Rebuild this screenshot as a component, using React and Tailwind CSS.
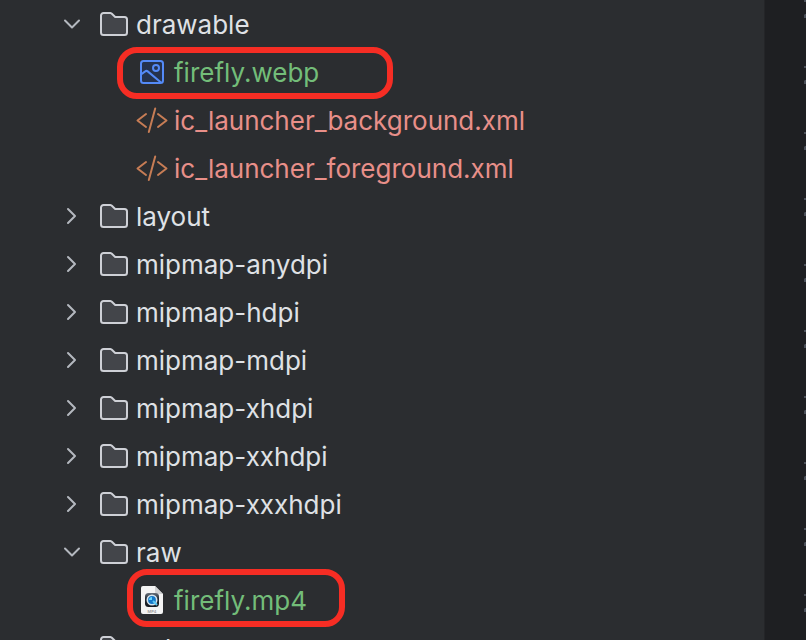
import React from "react";

function Chevron({ open }) {
  return (
    <svg className="size-8 shrink-0" viewBox="0 0 32 32" fill="none" stroke="#b4b8bf" strokeWidth="2" strokeLinecap="round" strokeLinejoin="round" aria-hidden="true">
      <path d={open ? "M9 12.5 16 19.5 23 12.5" : "M12 9 19 16 12 23"} />
    </svg>
  );
}

function FolderIcon() {
  return (
    <svg className="size-8 shrink-0" viewBox="0 0 32 32" aria-hidden="true">
      <path d="M3 7.5A2.5 2.5 0 0 1 5.5 5h6.7a2 2 0 0 1 1.4.6L17.2 9H26.5a2.5 2.5 0 0 1 2.5 2.5v13a2.5 2.5 0 0 1-2.5 2.5H5.5a2.5 2.5 0 0 1-2.5-2.5Z" fill="#43454a" stroke="#ced0d6" strokeWidth="2" strokeLinejoin="round" />
    </svg>
  );
}

function ImageIcon() {
  return (
    <svg className="size-8 shrink-0" viewBox="0 0 32 32" fill="none" stroke="#548af7" strokeWidth="2" aria-hidden="true">
      <rect x="5" y="5" width="22" height="22" rx="2.5" fill="#25324d" />
      <circle cx="20" cy="12" r="3" />
      <path d="M5 18.5 9.2 15.4a2 2 0 0 1 2.5 0L25 26.5" />
    </svg>
  );
}

function XmlIcon() {
  return (
    <svg className="size-8 shrink-0" viewBox="0 0 32 32" fill="none" stroke="#c77d55" strokeWidth="2" strokeLinecap="round" strokeLinejoin="round" aria-hidden="true">
      <path d="M10 10 1.5 16.5 10 23M22 10l8.5 6.5L22 23M19.2 4.5 12.8 28" />
    </svg>
  );
}

function VideoIcon() {
  return (
    <svg className="size-8 shrink-0" viewBox="0 0 32 32" aria-hidden="true">
      <defs>
        <linearGradient id="app" x1="0" y1="0" x2="0" y2="1">
          <stop offset="0" stopColor="#68717c" />
          <stop offset="0.4" stopColor="#252b34" />
          <stop offset="1" stopColor="#14181f" />
        </linearGradient>
      </defs>
      <path d="M5 4a2 2 0 0 1 2-2h12l8 8v18a2 2 0 0 1-2 2H7a2 2 0 0 1-2-2Z" fill="#f4f4f4" />
      <path d="M19 2v6a2 2 0 0 0 2 2h6Z" fill="#cfd0d1" />
      <rect x="9" y="9" width="14" height="14" rx="3.5" fill="url(#app)" />
      <circle cx="16" cy="16" r="4.7" fill="#1578c8" stroke="#d5e4ef" strokeWidth="1.6" />
      <path d="M13 16a3 3 0 0 1 3-3v3Z" fill="#68d6ff" />
      <path d="m17 17 4 4" stroke="#5bc8f4" strokeWidth="2" />
      <text x="16" y="28.5" textAnchor="middle" fontSize="4" fontWeight="600" fill="#999999" fontFamily="Inter, sans-serif">MP4</text>
    </svg>
  );
}

const icons = { image: ImageIcon, xml: XmlIcon, video: VideoIcon };

const entries = [
  {
    name: "drawable",
    files: [
      { name: "firefly.webp", icon: "image", color: "text-[#73bd79]", mark: "-left-[19px] -top-px h-[52px] w-[276px]" },
      { name: "ic_launcher_background.xml", icon: "xml", color: "text-[#e88f89]" },
      { name: "ic_launcher_foreground.xml", icon: "xml", color: "text-[#e88f89]" },
    ],
  },
  { name: "layout" },
  { name: "mipmap-anydpi" },
  { name: "mipmap-hdpi" },
  { name: "mipmap-mdpi" },
  { name: "mipmap-xhdpi" },
  { name: "mipmap-xxhdpi" },
  { name: "mipmap-xxxhdpi" },
  {
    name: "raw",
    files: [{ name: "firefly.mp4", icon: "video", color: "text-[#73bd79]", mark: "-left-[9px] -top-[7px] h-[58px] w-[218px]" }],
  },
  { name: "values" },
];

function FileRow({ file }) {
  const Icon = icons[file.icon];
  return (
    <li className="relative">
      <button type="button" className={`flex h-12 w-full items-center gap-1.5 whitespace-nowrap text-left ${file.color}`}>
        <Icon />
        <span className="pt-0.5">{file.name}</span>
      </button>
      {file.mark && <span className={`pointer-events-none absolute rounded-[20px] border-6 border-[#f62d24] ${file.mark}`} />}
    </li>
  );
}

function FolderRow({ entry }) {
  return (
    <li>
      <button type="button" aria-expanded={Boolean(entry.files)} className="flex h-12 w-full items-center whitespace-nowrap pl-14 text-left text-[#dfe1e5]">
        <Chevron open={Boolean(entry.files)} />
        <span className="ml-2.5 flex items-center gap-1.5">
          <FolderIcon />
          <span className="pt-0.5">{entry.name}</span>
        </span>
      </button>
      {entry.files && (
        <ul className="pl-[136px]">
          {entry.files.map((file) => (
            <FileRow key={file.name} file={file} />
          ))}
        </ul>
      )}
    </li>
  );
}

function EditorGutter() {
  return (
    <div className="flex w-[42px] shrink-0 justify-end border-l border-[#242528] bg-[#1e1f22]">
      <svg className="h-full w-0.5" aria-hidden="true">
        <defs>
          <pattern id="digits" width="2" height="66" patternUnits="userSpaceOnUse">
            <path d="M0 2V0L1-2H2V2ZM0 18V15L1 14H2V18Z" fill="#4b5059" />
          </pattern>
        </defs>
        <rect width="2" height="100%" fill="url(#digits)" />
      </svg>
    </div>
  );
}

export default function App() {
  return (
    <main className="flex h-screen overflow-hidden bg-[#2b2d30] font-['Inter',sans-serif] text-[26px] leading-8 [text-rendering:geometricPrecision]">
      <nav aria-label="Project files" className="min-w-0 flex-1 overflow-hidden">
        <ul>
          {entries.map((entry) => (
            <FolderRow key={entry.name} entry={entry} />
          ))}
        </ul>
      </nav>
      <EditorGutter />
    </main>
  );
}
